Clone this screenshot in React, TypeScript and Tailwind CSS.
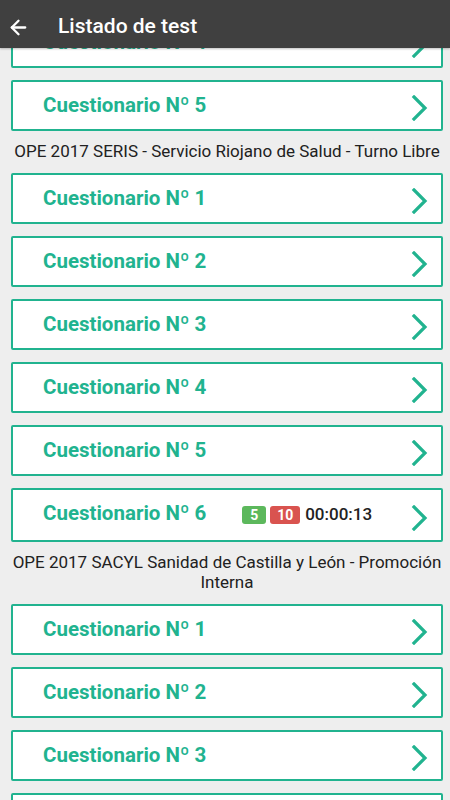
import { ArrowLeft } from 'lucide-react'

type Item = { n: number; ok?: number; ko?: number; time?: string }

const sections: { title?: string; items: Item[] }[] = [
  { items: [{ n: 4 }, { n: 5 }] },
  {
    title: 'OPE 2017 SERIS - Servicio Riojano de Salud - Turno Libre',
    items: [{ n: 1 }, { n: 2 }, { n: 3 }, { n: 4 }, { n: 5 }, { n: 6, ok: 5, ko: 10, time: '00:00:13' }],
  },
  {
    title: 'OPE 2017 SACYL Sanidad de Castilla y León - Promoción Interna',
    items: [{ n: 1 }, { n: 2 }, { n: 3 }, { n: 4 }],
  },
]

function Chevron() {
  return (
    <svg width="18" height="26" viewBox="0 0 18 26" className="mt-[5px] shrink-0">
      <path d="M4 2 L15 13 L4 24" fill="none" stroke="#21b38f" strokeWidth="3.2" strokeLinecap="square" />
    </svg>
  )
}

function Card({ item }: { item: Item }) {
  const stats = item.ok !== undefined
  return (
    <div
      className={
        'bg-white border-2 border-[#21b38f] rounded-[2px] flex items-center pl-[30px] pr-[13px] ' +
        (stats ? 'h-[54px]' : 'h-[51px]')
      }
    >
      <span className={'text-[20.5px] font-bold text-[#21b38f] ' + (stats ? '-mt-[4px]' : '')}>
        Cuestionario Nº {item.n}
      </span>
      <div className="flex-1 flex items-center pl-[36px]">
        {stats && (
          <>
            <span className="h-[18px] w-[24px] rounded-[3px] bg-[#5cb85c] text-white text-[14px] font-bold flex items-center justify-center">
              {item.ok}
            </span>
            <span className="ml-[4px] h-[18px] w-[30px] rounded-[3px] bg-[#d9534f] text-white text-[14px] font-bold flex items-center justify-center">
              {item.ko}
            </span>
            <span className="ml-[5px] text-[17px] font-medium text-[#222]">{item.time}</span>
          </>
        )}
      </div>
      <Chevron />
    </div>
  )
}

export default function App() {
  return (
    <div
      className="w-[450px] h-[800px] bg-[#eeeeee] flex flex-col overflow-hidden"
      style={{ fontFamily: 'Roboto, "Noto Sans", sans-serif' }}
    >
      <div className="h-[48px] shrink-0 bg-[#404040] flex items-center pt-[6px] shadow-[0_1px_2px_rgba(0,0,0,0.25)] z-10">
        <ArrowLeft className="ml-[7px] text-white" size={23} strokeWidth={2.4} />
        <span className="ml-[28px] text-white text-[21px] font-medium">Listado de test</span>
      </div>
      <div className="flex-1 overflow-hidden">
        <div className="-mt-[31px] pl-[11px] pr-[7px] flex flex-col">
          {sections.map((s, i) => (
            <div key={i} className="flex flex-col">
              {s.title && (
                <div className="text-center text-[17px] leading-[20px] text-[#212121] pt-[10px] pb-[12px]">
                  {s.title}
                </div>
              )}
              <div className="flex flex-col gap-[12px]">
                {s.items.map((it) => (
                  <Card key={it.n} item={it} />
                ))}
              </div>
            </div>
          ))}
        </div>
      </div>
    </div>
  )
}
